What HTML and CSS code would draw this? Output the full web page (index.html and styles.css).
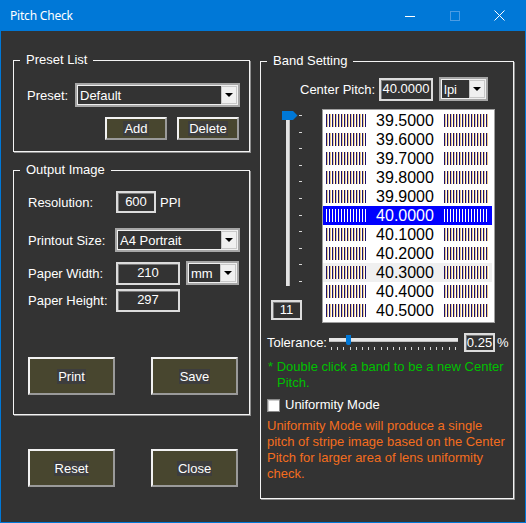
FILE: index.html
```html
<!DOCTYPE html>
<html lang="en">
<head>
  <meta charset="UTF-8">
  <title>Pitch Check</title>
  <link rel="stylesheet" href="styles.css">
</head>
<body>
  <div class="window">
    <div class="titlebar">
      <span class="title">Pitch Check</span>
      <span class="caption">
        <svg width="10" height="10" viewBox="0 0 10 10" shape-rendering="crispEdges"><path d="M0 5.5H10" stroke="#fff" stroke-width="1"/></svg>
      </span>
      <span class="caption">
        <svg width="10" height="10" viewBox="0 0 10 10" shape-rendering="crispEdges"><rect x="0.5" y="0.5" width="9" height="9" fill="none" stroke="#4c9ce3" stroke-width="1"/></svg>
      </span>
      <span class="caption">
        <svg width="11" height="11" viewBox="0 0 11 11"><path d="M0.5 0.5L10.5 10.5M10.5 0.5L0.5 10.5" stroke="#fff" stroke-width="1"/></svg>
      </span>
    </div>

    <div class="client">
      <div class="col-left">
        <div class="group preset">
          <div class="group-title">Preset List</div>
          <div class="row preset-row">
            <span class="lbl w-preset">Preset:</span>
            <div class="combo c-preset"><span class="combo-text">Default</span><span class="drop"></span></div>
          </div>
          <div class="small-btns">
            <button class="btn btn-sm"><span>Add</span></button>
            <button class="btn btn-sm"><span>Delete</span></button>
          </div>
        </div>

        <div class="group output">
          <div class="group-title">Output Image</div>
          <div class="row out-row res-row">
            <span class="lbl w-out">Resolution:</span>
            <div class="field f-res">600</div>
            <span class="unit">PPI</span>
          </div>
          <div class="row out-row size-row">
            <span class="lbl w-out2">Printout Size:</span>
            <div class="combo c-size"><span class="combo-text">A4 Portrait</span><span class="drop"></span></div>
          </div>
          <div class="row out-row width-row">
            <span class="lbl w-out">Paper Width:</span>
            <div class="field f-paper">210</div>
            <div class="combo c-unit"><span class="combo-text">mm</span><span class="drop"></span></div>
          </div>
          <div class="row out-row height-row">
            <span class="lbl w-out">Paper Height:</span>
            <div class="field f-paper">297</div>
          </div>
          <div class="big-btns">
            <button class="btn btn-lg"><span>Print</span></button>
            <button class="btn btn-lg"><span>Save</span></button>
          </div>
        </div>

        <div class="big-btns bottom-btns">
          <button class="btn btn-lg"><span>Reset</span></button>
          <button class="btn btn-lg"><span>Close</span></button>
        </div>
      </div>

      <div class="col-right">
        <div class="group band">
          <div class="group-title">Band Setting</div>
          <div class="row pitch-row">
            <span class="lbl w-pitch">Center Pitch:</span>
            <div class="field f-pitch">40.0000</div>
            <div class="combo c-lpi"><span class="combo-text">lpi</span><span class="drop"></span></div>
          </div>

          <div class="band-main">
            <div class="slider-col">
              <div class="vslider">
                <div class="vtrack"></div>
                <div class="vticks">
                  <i></i><i></i><i></i><i></i><i></i><i></i><i></i><i></i><i></i><i></i><i></i>
                </div>
                <svg class="vthumb" width="16" height="9" viewBox="0 0 16 9"><path d="M0 0H11L15.5 4.5L11 9H0Z" fill="#0078d7"/></svg>
              </div>
              <div class="field f-count">11</div>
            </div>

            <div class="band-list">
              <div class="band-row"><i class="stripe"></i><span class="val">39.5000</span><i class="stripe wide"></i></div>
              <div class="band-row"><i class="stripe"></i><span class="val">39.6000</span><i class="stripe wide"></i></div>
              <div class="band-row"><i class="stripe"></i><span class="val">39.7000</span><i class="stripe wide"></i></div>
              <div class="band-row"><i class="stripe"></i><span class="val">39.8000</span><i class="stripe wide"></i></div>
              <div class="band-row"><i class="stripe"></i><span class="val">39.9000</span><i class="stripe wide"></i></div>
              <div class="band-row selected"><i class="stripe"></i><span class="val">40.0000</span><i class="stripe wide"></i></div>
              <div class="band-row"><i class="stripe"></i><span class="val">40.1000</span><i class="stripe wide"></i></div>
              <div class="band-row"><i class="stripe"></i><span class="val">40.2000</span><i class="stripe wide"></i></div>
              <div class="band-row hover"><i class="stripe"></i><span class="val">40.3000</span><i class="stripe wide"></i></div>
              <div class="band-row"><i class="stripe"></i><span class="val">40.4000</span><i class="stripe wide"></i></div>
              <div class="band-row"><i class="stripe"></i><span class="val">40.5000</span><i class="stripe wide"></i></div>
            </div>
          </div>

          <div class="row tol-row">
            <span class="lbl w-tol">Tolerance:</span>
            <div class="hslider">
              <div class="htrack"></div>
              <div class="hthumb"></div>
              <div class="hticks">
                <i></i><i></i><i></i><i></i><i></i><i></i><i></i><i></i><i></i><i></i><i></i>
                <i></i><i></i><i></i><i></i><i></i><i></i><i></i><i></i><i></i><i></i>
              </div>
            </div>
            <div class="field f-tol">0.25</div>
            <span class="pct">%</span>
          </div>

          <p class="note">* Double click a band to be a new Center Pitch.</p>

          <label class="check-row">
            <span class="checkbox"></span>
            <span>Uniformity Mode</span>
          </label>

          <p class="warn">Uniformity Mode will produce a single pitch of stripe image based on the Center Pitch for larger area of lens uniformity check.</p>
        </div>
      </div>
    </div>
  </div>
</body>
</html>
```

FILE: styles.css
```css
* {
  box-sizing: border-box;
}
body {
  margin: 0;
  background: #333;
  font-family: "Liberation Sans", Arial, sans-serif;
  font-size: 13px;
  color: #fff;
}
.window {
  width: 526px;
  height: 523px;
  border: 1px solid #0078d7;
  border-top: 0;
  background: #333;
  display: flex;
  flex-direction: column;
}
.titlebar {
  height: 31px;
  flex: none;
  background: #0078d7;
  display: flex;
  align-items: center;
  padding: 0 3px 0 9px;
  font-family: "Noto Sans", sans-serif;
  font-size: 12px;
  letter-spacing: -0.2px;
}
.title {
  flex: 1;
  margin-top: -1px;
}
.caption {
  width: 45px;
  height: 31px;
  display: flex;
  align-items: center;
  justify-content: center;
}

.client {
  flex: 1;
  display: flex;
}
.col-left {
  margin-left: 12px;
  width: 237px;
}
.col-right {
  margin-left: 10px;
  width: 254px;
}

/* group boxes */
.group {
  border: 1px solid #f4f4f4;
  box-shadow: 1px 1px 0 #8e8e8e;
}
.group-title {
  display: table;
  margin: -9px 0 0 6px;
  padding: 0 6px;
  line-height: 16px;
  background: #333;
}
.preset {
  margin-top: 29px;
  height: 92px;
}
.output {
  margin-top: 18px;
  height: 245px;
}
.band {
  margin-top: 30px;
  height: 438px;
}

.row {
  display: flex;
  align-items: center;
}
.lbl {
  flex: none;
  white-space: nowrap;
}
.preset-row {
  margin-top: 15px;
  padding-left: 13px;
}
.w-preset { width: 48px; }
.w-out { width: 88px; }
.w-out2 { width: 87px; }
.w-pitch { width: 79px; }
.w-tol { width: 62px; }

/* inputs */
.field {
  border: 2px solid #dcdcdc;
  box-shadow: inset 1px 1px 0 #7a7a7a;
  background: #333;
  color: #fff;
  text-align: center;
  line-height: 17px;
}
.f-res { width: 40px; height: 22px; }
.f-paper { width: 64px; height: 23px; }
.f-pitch { width: 54px; height: 23px; line-height: 18px; }
.f-count { width: 31px; height: 20px; line-height: 16px; margin-top: 13px; }
.f-tol { width: 31px; height: 19px; line-height: 15px; margin-left: 6px; }
.unit {
  margin-left: 4px;
}
.pct {
  margin-left: 2px;
}

.combo {
  display: flex;
  align-items: stretch;
  border: 2px solid #a6a6a6;
  box-shadow: inset 1px 1px 0 #f0f0f0, inset -1px -1px 0 #f0f0f0;
  background: #333;
  padding: 1px;
}
.combo-text {
  flex: 1;
  padding-left: 2px;
  line-height: 19px;
  white-space: nowrap;
  overflow: hidden;
}
.drop {
  width: 16px;
  flex: none;
  background: #f0f0f0;
  border: 1px solid #c8c8c8;
  position: relative;
}
.drop::after {
  content: "";
  position: absolute;
  left: 3px;
  top: 6px;
  border-left: 4px solid transparent;
  border-right: 4px solid transparent;
  border-top: 4px solid #000;
}
.c-preset { width: 165px; height: 24px; }
.c-size { width: 125px; height: 24px; margin-left: 0; }
.c-unit { width: 53px; height: 24px; margin-left: 6px; }
.c-lpi { width: 49px; height: 24px; margin-left: 6px; }

/* buttons */
.btn {
  font-family: "Liberation Sans", Arial, sans-serif;
  font-size: 13px;
  color: #fff;
  background: #48462f;
  border: 2px solid;
  border-color: #f2f2f2 #9a9a9a #9a9a9a #f2f2f2;
  padding: 0;
  display: flex;
  align-items: center;
  justify-content: center;
}
.btn span {
  background: #3d3d3d;
  padding: 0 1px;
  line-height: 15px;
}
.small-btns {
  margin-top: 10px;
  display: flex;
  justify-content: flex-end;
  gap: 10px;
  padding-right: 10px;
}
.btn-sm { width: 62px; height: 23px; }
.btn-lg { width: 87px; height: 38px; }

.out-row {
  padding-left: 14px;
}
.res-row { margin-top: 13px; }
.size-row { margin-top: 15px; }
.width-row { margin-top: 9px; }
.height-row { margin-top: 4px; }
.big-btns {
  display: flex;
  gap: 36px;
  padding-left: 14px;
  margin-top: 45px;
}
.bottom-btns {
  margin-top: 34px;
  padding-left: 15px;
}

/* band setting */
.pitch-row {
  margin-top: 8px;
  padding-left: 39px;
}
.band-main {
  display: flex;
  margin-top: 8px;
}
.slider-col {
  margin-left: 10px;
  width: 31px;
}
.vslider {
  position: relative;
  height: 178px;
}
.vtrack {
  position: absolute;
  left: 15px;
  top: 2px;
  width: 4px;
  height: 175px;
  background: #e3e3e3;
  border-right: 1px solid #b8b8b8;
}
.vthumb {
  position: absolute;
  left: 11px;
  top: 2px;
}
.vticks {
  position: absolute;
  left: 28px;
  top: 6px;
  height: 167px;
  display: flex;
  flex-direction: column;
  justify-content: space-between;
}
.vticks i {
  display: block;
  width: 3px;
  height: 1px;
  background: #d8d8d8;
}

.band-list {
  margin-left: 20px;
  width: 173px;
  height: 214px;
  border: 1px solid #a0a0a0;
  background: #fff;
  padding: 1px 2px 0 0;
}
.band-row {
  height: 19px;
  display: flex;
  align-items: center;
  color: #000;
  font-size: 16px;
}
.band-row .val {
  flex: 1;
  text-align: center;
  line-height: 19px;
}
.stripe {
  display: block;
  width: 40px;
  height: 13px;
  margin-left: 3px;
  background: repeating-linear-gradient(90deg, #1d1268 0 1px, #e9c98a 1px 1.6px, #fff 1.6px 3px);
}
.stripe.wide {
  width: 45px;
  margin-left: 0;
  margin-right: 3px;
}
.band-row.selected {
  background: #0000ff;
  color: #fff;
}
.band-row.selected .stripe {
  background: repeating-linear-gradient(90deg, #fff 0 1px, #0000ff 1px 3px);
}
.band-row.hover {
  background: #f0f0f0;
}

.tol-row {
  margin-top: 10px;
  padding-left: 6px;
}
.hslider {
  position: relative;
  width: 129px;
  height: 19px;
}
.htrack {
  position: absolute;
  left: 0;
  top: 5px;
  width: 129px;
  height: 4px;
  background: #e7e7e7;
  border-bottom: 1px solid #c0c0c0;
}
.hthumb {
  position: absolute;
  left: 17px;
  top: 2px;
  width: 5px;
  height: 10px;
  background: #0078d7;
  border-radius: 0 0 2px 2px;
}
.hticks {
  position: absolute;
  left: 2px;
  top: 14px;
  width: 125px;
  display: flex;
  justify-content: space-between;
}
.hticks i {
  display: block;
  width: 1px;
  height: 3px;
  background: #d8d8d8;
}

.note {
  margin: 7px 0 0;
  padding: 0 3px 0 16px;
  text-indent: -9px;
  line-height: 16px;
  color: #00c000;
}
.check-row {
  display: flex;
  align-items: center;
  margin-top: 6px;
  padding-left: 6px;
  line-height: 16px;
}
.checkbox {
  width: 13px;
  height: 13px;
  background: #fff;
  border: 1px solid #8c8c8c;
  box-shadow: inset 1px 1px 0 #cfcfcf;
  margin-right: 5px;
}
.warn {
  margin: 5px 0 0;
  padding: 0 2px 0 6px;
  line-height: 16px;
  color: #f36d1e;
}
```
